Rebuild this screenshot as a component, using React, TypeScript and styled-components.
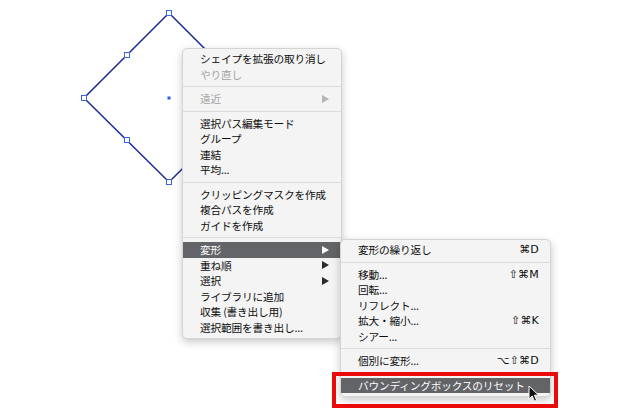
import React from 'react';
import styled, { createGlobalStyle } from 'styled-components';

type MenuEntry =
  | { kind: 'sep' }
  | {
      kind: 'item';
      label: string;
      disabled?: boolean;
      arrow?: boolean;
      active?: boolean;
      shortcut?: string;
      sub?: MenuEntry[];
    };

const transformMenu: MenuEntry[] = [
  { kind: 'item', label: '変形の繰り返し', shortcut: '⌘D' },
  { kind: 'sep' },
  { kind: 'item', label: '移動...', shortcut: '⇧⌘M' },
  { kind: 'item', label: '回転...' },
  { kind: 'item', label: 'リフレクト...' },
  { kind: 'item', label: '拡大・縮小...', shortcut: '⇧⌘K' },
  { kind: 'item', label: 'シアー...' },
  { kind: 'sep' },
  { kind: 'item', label: '個別に変形...', shortcut: '⌥⇧⌘D' },
  { kind: 'sep' },
  { kind: 'item', label: 'バウンディングボックスのリセット', active: true },
];

const contextMenu: MenuEntry[] = [
  { kind: 'item', label: 'シェイプを拡張の取り消し' },
  { kind: 'item', label: 'やり直し', disabled: true },
  { kind: 'sep' },
  { kind: 'item', label: '遠近', disabled: true, arrow: true },
  { kind: 'sep' },
  { kind: 'item', label: '選択パス編集モード' },
  { kind: 'item', label: 'グループ' },
  { kind: 'item', label: '連結' },
  { kind: 'item', label: '平均...' },
  { kind: 'sep' },
  { kind: 'item', label: 'クリッピングマスクを作成' },
  { kind: 'item', label: '複合パスを作成' },
  { kind: 'item', label: 'ガイドを作成' },
  { kind: 'sep' },
  { kind: 'item', label: '変形', arrow: true, active: true, sub: transformMenu },
  { kind: 'item', label: '重ね順', arrow: true },
  { kind: 'item', label: '選択', arrow: true },
  { kind: 'item', label: 'ライブラリに追加' },
  { kind: 'item', label: '収集 (書き出し用)' },
  { kind: 'item', label: '選択範囲を書き出し...' },
];

const Menu = ({ entries }: { entries: MenuEntry[] }) => (
  <>
    {entries.map((entry, i) =>
      entry.kind === 'sep' ? (
        <Separator key={i} />
      ) : (
        <Item key={i} $active={entry.active} $disabled={entry.disabled}>
          <Label>{entry.label}</Label>
          {entry.shortcut && <Shortcut>{entry.shortcut}</Shortcut>}
          {entry.arrow && <Arrow $active={entry.active} $disabled={entry.disabled} />}
          {entry.sub && (
            <SubPanel>
              <Menu entries={entry.sub} />
            </SubPanel>
          )}
        </Item>
      )
    )}
  </>
);

const Handle = ({ x, y }: { x: number; y: number }) => (
  <rect x={x - 2.5} y={y - 2.5} width={5} height={5} fill="#fff" stroke="#3d63e6" strokeWidth={1} />
);

export default function App() {
  return (
    <>
      <GlobalStyle />
      <Canvas>
        <Artwork width={630} height={420}>
          <polygon points="169,13 254,98 169,182 84,98" fill="none" stroke="#1b2a96" strokeWidth={1.5} />
          <Handle x={169} y={13} />
          <Handle x={84} y={98} />
          <Handle x={169} y={182} />
          <Handle x={127} y={55} />
          <Handle x={127} y={140} />
          <rect x={167.5} y={96.5} width={3} height={3} fill="#2f5af0" />
        </Artwork>
        <MainPanel>
          <Menu entries={contextMenu} />
        </MainPanel>
        <Annotation />
        <Cursor width={14} height={18} viewBox="0 0 14 18">
          <path d="M1 1 L1 14 L4.2 11 L6.5 16.2 L8.6 15.3 L6.4 10.2 L10.6 10.2 Z" fill="#111" stroke="#fff" strokeWidth={1} strokeLinejoin="round" />
        </Cursor>
      </Canvas>
    </>
  );
}

const GlobalStyle = createGlobalStyle`
  body {
    margin: 0;
    background: #ffffff;
    font-family: "Noto Sans CJK JP", "Liberation Sans", sans-serif;
  }
`;

const Canvas = styled.div`
  position: relative;
  width: 630px;
  height: 420px;
  overflow: hidden;
  background: #fff;
`;

const Artwork = styled.svg`
  position: absolute;
  left: 0;
  top: 0;
`;

const Panel = styled.div`
  position: absolute;
  display: flex;
  flex-direction: column;
  padding: 2px 0 3px;
  background: #f4f4f4;
  border: 1px solid #d4d4d4;
  border-radius: 5px;
  box-shadow: 0 3px 9px rgba(0, 0, 0, 0.22);
  box-sizing: border-box;
`;

const MainPanel = styled(Panel)`
  left: 182px;
  top: 48px;
  width: 160px;
`;

const SubPanel = styled(Panel)`
  left: calc(100% - 1px);
  top: -3px;
  width: 211px;
  z-index: 2;
`;

const Item = styled.div<{ $active?: boolean; $disabled?: boolean }>`
  position: relative;
  display: flex;
  align-items: center;
  flex-shrink: 0;
  height: 15.5px;
  min-height: 0;
  padding: 0 11px 0 17px;
  font-size: 10.7px;
  line-height: 15px;
  white-space: nowrap;
  color: ${(p) => (p.$active ? '#ffffff' : p.$disabled ? '#a4a4a4' : '#0d0d0d')};
  background: ${(p) => (p.$active ? '#636468' : 'transparent')};
`;

const Label = styled.span`
  flex: 1;
  letter-spacing: -0.2px;
`;

const Shortcut = styled.span`
  font-family: "DejaVu Sans", "Liberation Sans", sans-serif;
  font-size: 11px;
  letter-spacing: 0.2px;
`;

const Arrow = styled.span<{ $active?: boolean; $disabled?: boolean }>`
  width: 0;
  height: 0;
  margin-right: 1px;
  border-top: 4px solid transparent;
  border-bottom: 4px solid transparent;
  border-left: 7px solid ${(p) => (p.$active ? '#ffffff' : p.$disabled ? '#b4b4b4' : '#2a2a2a')};
`;

const Separator = styled.div`
  flex-shrink: 0;
  height: 1px;
  margin: 4px 0;
  background: #dcdcdc;
`;

const Annotation = styled.div`
  position: absolute;
  left: 332px;
  top: 372px;
  width: 226px;
  height: 36px;
  border: 4px solid #ea0a0a;
  box-sizing: border-box;
  z-index: 3;
`;

const Cursor = styled.svg`
  position: absolute;
  left: 528px;
  top: 385px;
  z-index: 4;
`;
